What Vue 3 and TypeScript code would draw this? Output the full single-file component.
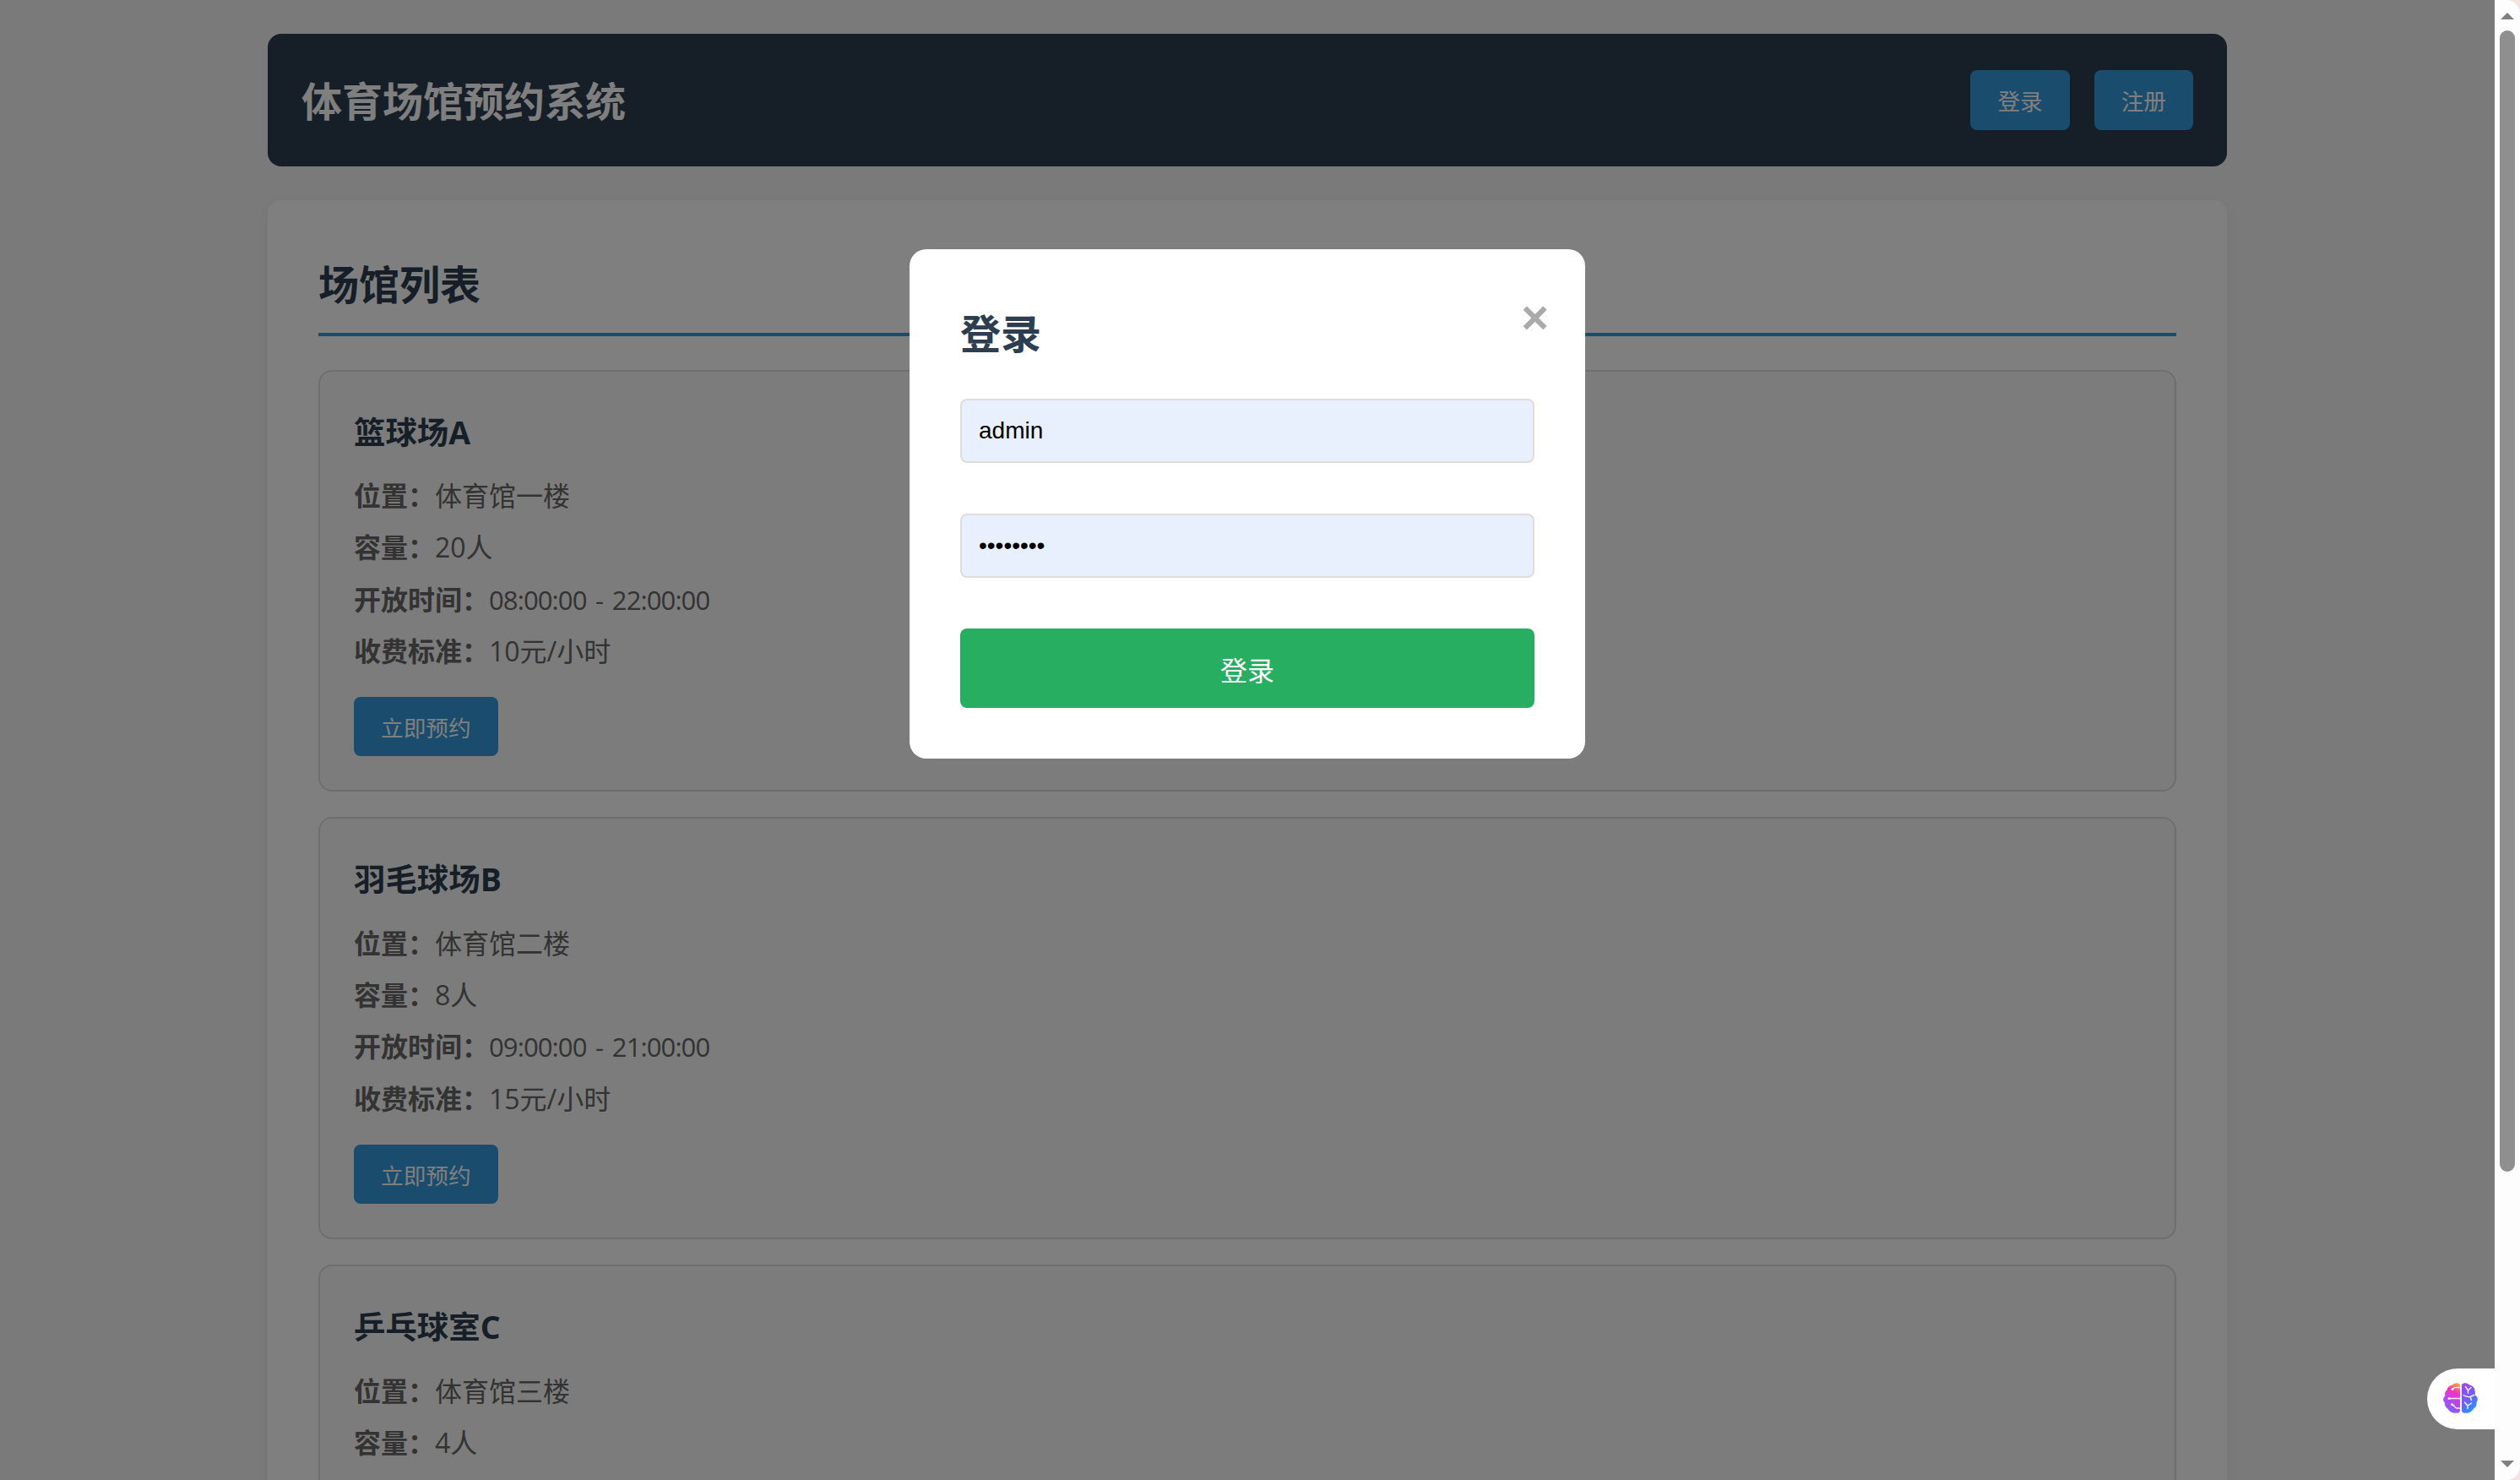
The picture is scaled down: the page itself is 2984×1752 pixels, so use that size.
<script setup lang="ts">
interface Row {
  label: string
  value: string
  time?: boolean
}

interface Venue {
  name: string
  rows: Row[]
  bookable: boolean
}

const fullVenue = (name: string, place: string, cap: string, time: string, fee: string): Venue => ({
  name,
  bookable: true,
  rows: [
    { label: '位置：', value: place },
    { label: '容量：', value: cap },
    { label: '开放时间：', value: time, time: true },
    { label: '收费标准：', value: fee },
  ],
})

const venues: Venue[] = [
  fullVenue('篮球场A', '体育馆一楼', '20人', '08:00:00 - 22:00:00', '10元/小时'),
  fullVenue('羽毛球场B', '体育馆二楼', '8人', '09:00:00 - 21:00:00', '15元/小时'),
  {
    name: '乒乓球室C',
    bookable: false,
    rows: [
      { label: '位置：', value: '体育馆三楼' },
      { label: '容量：', value: '4人' },
    ],
  },
]
</script>

<template>
  <div class="window">
    <div class="page">
      <div class="container">
        <header class="topbar">
          <h1>体育场馆预约系统</h1>
          <div class="actions">
            <button class="btn" type="button">登录</button>
            <button class="btn" type="button">注册</button>
          </div>
        </header>
        <section class="panel">
          <h2>场馆列表</h2>
          <article v-for="v in venues" :key="v.name" class="card">
            <h3>{{ v.name }}</h3>
            <p v-for="r in v.rows" :key="r.label"><strong>{{ r.label }}</strong><span :class="{ time: r.time }">{{ r.value }}</span></p>
            <button v-if="v.bookable" class="btn book" type="button">立即预约</button>
          </article>
        </section>
      </div>

      <div class="overlay">
        <div class="modal">
          <span class="close">×</span>
          <h2 class="modal-title">登录</h2>
          <input class="field" type="text" value="admin" />
          <input class="field" type="password" value="password" />
          <button class="submit" type="button">登录</button>
        </div>
      </div>

      <div class="float-pill">
        <svg width="50" height="48" viewBox="0 0 50 48" aria-hidden="true">
          <defs>
            <linearGradient id="brainL" x1="0.75" y1="0" x2="0.45" y2="1">
              <stop offset="0" stop-color="#ffa41f" />
              <stop offset="0.28" stop-color="#f534bd" />
              <stop offset="0.62" stop-color="#b945ee" />
              <stop offset="1" stop-color="#7a63fa" />
            </linearGradient>
            <linearGradient id="brainR" x1="0.2" y1="0" x2="0.7" y2="1">
              <stop offset="0" stop-color="#9f45ec" />
              <stop offset="0.55" stop-color="#6a63f8" />
              <stop offset="1" stop-color="#14a3ff" />
            </linearGradient>
          </defs>
          <path fill="url(#brainL)" d="M24 7C22 4.500 17.500 4.500 15 7.500C11.500 8 9 10.500 8.500 13.500C6 15.500 5.500 18 6.500 20.500C3.500 22.500 3.500 26.500 6 28.500C5.500 31.500 7 34.500 9.500 35.500C11 38.500 15 41.500 19 40.500C21.500 41.500 24 40 24 38Z" />
          <path fill="url(#brainR)" d="M26 7C28 4.500 32.500 4.500 35 7.500C38.500 8 41 10.500 41.500 13.500C42 16 42 18 41.500 19.500C45 21 46 25 43.500 28C44 31 42.500 34.500 40 35.500C38.500 38.500 34.500 41.500 31 40.500C28.500 41.500 26 40 26 38Z" />
          <g fill="none" stroke="#f8eefd" stroke-width="1.400" stroke-linecap="round">
            <path d="M24 10.500H18.500Q16.500 10.500 15.500 12" />
            <path d="M24 23.500H11.500" />
            <path d="M24 35H20.500Q18.500 35 17.500 33Q16.500 31.500 15 31" />
            <path d="M30.500 9.500L33.500 14L37 10.500M33.500 14V17" />
            <path d="M28 19.500Q32 22 36 21.500L40.500 19.500M36 21.500L37.500 25.500" />
            <path d="M29.500 28L33 32L37.500 29M33 32V35.500" />
          </g>
          <circle cx="15" cy="12.500" r="1.500" fill="#f8eefd" />
          <circle cx="11" cy="23.500" r="1.500" fill="#f8eefd" />
          <circle cx="14.500" cy="30.500" r="1.500" fill="#f8eefd" />
        </svg>
      </div>
    </div>

    <div class="scrollbar">
      <svg class="arrow" width="16" height="8" viewBox="0 0 16 8" aria-hidden="true"><polygon points="8,0 16,8 0,8" /></svg>
      <div class="thumb"></div>
      <svg class="arrow down" width="16" height="8" viewBox="0 0 16 8" aria-hidden="true"><polygon points="0,0 16,0 8,8" /></svg>
    </div>
  </div>
</template>

<style>
html,
body {
  margin: 0;
  overflow: hidden;
}
</style>

<style scoped>
* {
  box-sizing: border-box;
}

.window {
  width: 2984px;
  height: 1752px;
  display: flex;
  overflow: hidden;
  background: #f2e4e1;
  font-family: "Open Sans", "Noto Sans CJK SC", sans-serif;
  font-size: 32px;
  line-height: 1.6;
  color: #333;
}

.page {
  position: relative;
  flex: 1;
  min-width: 0;
  overflow: hidden;
  background: #f5f5f5;
}

.container {
  width: 2320px;
  margin: 40px auto 0;
}

.topbar {
  display: flex;
  align-items: center;
  justify-content: space-between;
  padding: 40px;
  background: #2c3e50;
  border-radius: 16px;
  color: #fff;
}

.topbar h1 {
  margin: 0;
  padding-top: 4px;
  font-size: 48px;
  line-height: 72.8px;
  font-weight: 700;
}

.actions {
  display: flex;
  gap: 29px;
}

.btn {
  width: 117.3px;
  height: 71px;
  padding: 4px 0 0;
  border: 0;
  border-radius: 8px;
  background: #3498db;
  color: #fff;
  font-family: inherit;
  font-size: 26.67px;
  line-height: 1;
}

.panel {
  margin-top: 40px;
  padding: 60px;
  background: #fff;
  border-radius: 16px;
  box-shadow: 0 4px 20px rgba(0, 0, 0, 0.05);
}

.panel > h2 {
  margin: 0 0 40px;
  padding: 4px 0 20px;
  border-bottom: 4px solid #3498db;
  font-size: 48px;
  line-height: 72.8px;
  font-weight: 700;
  color: #2c3e50;
}

.card {
  min-height: 499.5px;
  margin-bottom: 30px;
  padding: 40px;
  border: 2px solid #ddd;
  border-radius: 16px;
  background: #f9f9f9;
}

.card h3 {
  margin: 0 0 15.7px;
  padding-top: 2px;
  font-size: 37.44px;
  font-weight: 700;
  color: #2c3e50;
}

.card p {
  margin: 0 0 6px;
  padding-top: 4px;
  color: #666;
}

.card strong {
  font-weight: 700;
}

.time {
  font-size: 31px;
  letter-spacing: -0.9px;
  word-spacing: 3.5px;
}

.book {
  display: block;
  width: 170.7px;
  height: 70px;
  margin-top: 29.1px;
}

.overlay {
  position: absolute;
  inset: 0;
  background: rgba(0, 0, 0, 0.5);
}

.modal {
  position: relative;
  display: flex;
  flex-direction: column;
  width: 800px;
  margin: 295px auto 0;
  padding: 60px;
  background: #fff;
  border-radius: 20px;
}

.close {
  position: absolute;
  top: 36px;
  right: 43px;
  font-family: "Liberation Sans", sans-serif;
  font-size: 56px;
  font-weight: 700;
  line-height: 1.6;
  color: #aaa;
}

.modal-title {
  margin: 0 0 40px;
  padding-top: 4px;
  font-size: 48px;
  line-height: 72.8px;
  font-weight: 700;
  color: #2c3e50;
}

.field {
  display: block;
  width: 100%;
  height: 76px;
  margin-bottom: 60px;
  padding: 0 20px;
  border: 2px solid #ddd;
  border-radius: 8px;
  background: #e8f0fe;
  color: #000;
  font-family: "Liberation Sans", sans-serif;
  font-size: 28px;
  outline: none;
}

.submit {
  width: 100%;
  height: 94px;
  padding: 7px 0 0;
  border: 0;
  border-radius: 8px;
  background: #27ae60;
  color: #fff;
  font-family: inherit;
  font-size: 32px;
  line-height: 1;
}

.float-pill {
  position: absolute;
  top: 1620px;
  right: 0;
  display: flex;
  align-items: center;
  justify-content: center;
  width: 80px;
  height: 72px;
  background: #fff;
  border-radius: 36px 0 0 36px;
}

.scrollbar {
  flex: none;
  display: flex;
  flex-direction: column;
  align-items: center;
  width: 30px;
  padding: 15px 0;
  background: #fdfdfd;
  border-radius: 0 16px 16px 0;
}

.arrow {
  display: block;
  fill: #808080;
}

.arrow.down {
  margin-top: auto;
}

.thumb {
  width: 18px;
  height: 1351px;
  margin-top: 13px;
  border-radius: 9px;
  background: #8f8f8f;
}
</style>
